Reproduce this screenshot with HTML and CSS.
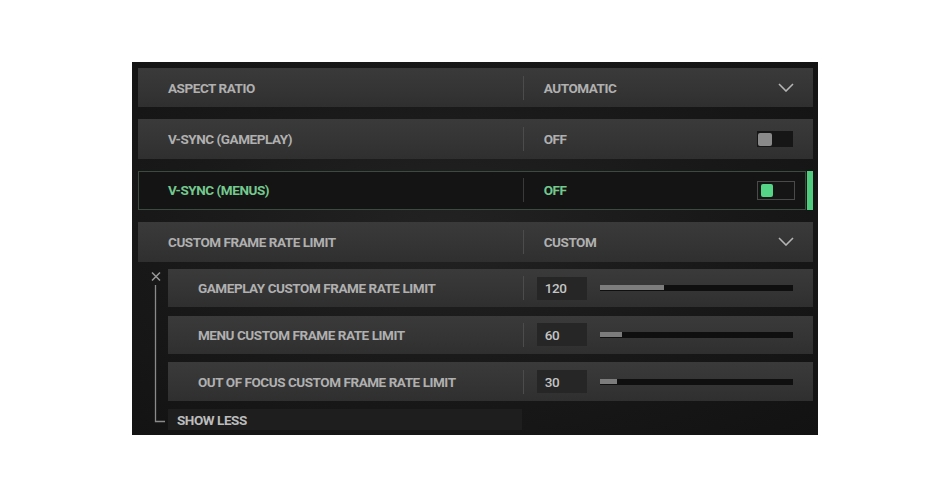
FILE: index.html
```html
<!DOCTYPE html>
<html>
<head>
<meta charset="utf-8">
<link rel="stylesheet" href="styles.css">
</head>
<body>
<div class="panel">
  <div class="row">
    <div class="label">ASPECT RATIO</div>
    <div class="sep"></div>
    <div class="value">AUTOMATIC</div>
    <svg class="chev" width="16" height="9" viewBox="0 0 16 9"><polyline points="1,1 8,8 15,1" fill="none" stroke="#b4b4b4" stroke-width="1.6"/></svg>
  </div>
  <div class="row">
    <div class="label">V-SYNC (GAMEPLAY)</div>
    <div class="sep"></div>
    <div class="value">OFF</div>
    <div class="toggle"><div class="knob"></div></div>
  </div>
  <div class="selwrap">
    <div class="row selected">
      <div class="label">V-SYNC (MENUS)</div>
      <div class="sep"></div>
      <div class="value">OFF</div>
      <div class="toggle on"><div class="knob"></div></div>
    </div>
    <div class="bar"></div>
  </div>
  <div class="row">
    <div class="label">CUSTOM FRAME RATE LIMIT</div>
    <div class="sep"></div>
    <div class="value">CUSTOM</div>
    <svg class="chev" width="16" height="9" viewBox="0 0 16 9"><polyline points="1,1 8,8 15,1" fill="none" stroke="#b4b4b4" stroke-width="1.6"/></svg>
  </div>
  <div class="sub">
    <svg class="tree" width="30" height="161" viewBox="0 0 30 161">
      <path d="M14 3.5 L22 11.5 M22 3.5 L14 11.5" stroke="#9a9a9a" stroke-width="1.5" fill="none"/>
      <path d="M17.5 16 V152.5 H27" stroke="#8a8a8a" stroke-width="1.3" fill="none"/>
    </svg>
    <div class="subrows">
      <div class="row subrow">
        <div class="label">GAMEPLAY CUSTOM FRAME RATE LIMIT</div>
        <div class="sep"></div>
        <div class="num">120</div>
        <div class="track"><div class="fill" style="width:33.5%"></div></div>
      </div>
      <div class="row subrow">
        <div class="label">MENU CUSTOM FRAME RATE LIMIT</div>
        <div class="sep"></div>
        <div class="num">60</div>
        <div class="track"><div class="fill" style="width:11.3%"></div></div>
      </div>
      <div class="row subrow">
        <div class="label">OUT OF FOCUS CUSTOM FRAME RATE LIMIT</div>
        <div class="sep"></div>
        <div class="num">30</div>
        <div class="track"><div class="fill" style="width:8.8%"></div></div>
      </div>
      <div class="showless">SHOW LESS</div>
    </div>
  </div>
</div>
</body>
</html>
```
FILE: styles.css
```css
html, body {
  margin: 0;
  padding: 0;
  background: #ffffff;
}
body {
  font-family: Roboto, "DejaVu Sans", sans-serif;
  font-weight: 700;
  font-size: 13.5px;
  letter-spacing: -0.45px;
  color: #b0b0b0;
}
.panel {
  box-sizing: border-box;
  margin: 62px 0 0 132px;
  width: 686px;
  height: 373px;
  padding: 6px 5px 0 6px;
  background: radial-gradient(ellipse at 45% 45%, #222222 0%, #181818 55%, #121212 100%);
  display: flex;
  flex-direction: column;
  gap: 12px;
}
.row {
  box-sizing: border-box;
  height: 39.4px;
  display: flex;
  align-items: center;
  padding: 0 19px 0 30px;
  background: linear-gradient(to bottom, #3a3a3a 0%, #343434 60%, #2f2f2f 100%);
}
.label {
  flex: 0 0 354.7px;
  white-space: nowrap;
}
.sep {
  flex: 0 0 1px;
  height: 24px;
  background: #4c4c4c;
}
.value {
  flex: 1;
  margin-left: 20px;
}
.chev {
  display: block;
}
.toggle {
  box-sizing: border-box;
  width: 36px;
  height: 16px;
  margin-right: 1px;
  background: #161616;
  padding: 1.5px 0 0 1px;
}
.knob {
  width: 14px;
  height: 13px;
  border-radius: 2px;
  background: #8a8a8a;
}
.selwrap {
  display: flex;
  gap: 1.5px;
  height: 39.4px;
}
.row.selected {
  flex: 1;
  height: 39.4px;
  border: 1px solid #3b4b40;
  background: #141414;
  color: #74c98e;
  padding-left: 29px;
  padding-right: 10px;
}
.row.selected .label {
  flex-basis: 354.7px;
}
.row.selected .sep {
  background: #3a3a3a;
}
.toggle.on {
  width: 38px;
  height: 19px;
  margin-right: 0;
  border: 1px solid #4a4a4a;
  background: #151515;
  padding: 2px 0 0 3px;
}
.toggle.on .knob {
  width: 12px;
  height: 13px;
  background: #55d386;
}
.bar {
  flex: 0 0 6px;
  background: #4fcc7e;
}
.sub {
  display: flex;
  margin-top: -4.5px;
  height: 161px;
}
.tree {
  display: block;
  flex: 0 0 30px;
}
.subrows {
  flex: 1;
  display: flex;
  flex-direction: column;
  gap: 8.4px;
}
.row.subrow {
  height: 38.3px;
  padding-right: 20px;
}
.subrow .label {
  flex-basis: 324.7px;
}
.num {
  box-sizing: border-box;
  width: 50px;
  height: 23px;
  margin-left: 13px;
  padding-left: 8px;
  background: #262626;
  display: flex;
  align-items: center;
  font-weight: 500;
  color: #c4c4c4;
}
.track {
  flex: 1;
  margin-left: 13px;
  height: 6px;
  background: #0f0f0f;
}
.fill {
  height: 5px;
  background: #7c7c7c;
}
.showless {
  box-sizing: border-box;
  width: 354px;
  height: 20.7px;
  margin-top: 0.2px;
  padding-left: 9px;
  display: flex;
  align-items: center;
  background: #1e1e1e;
  color: #bcbcbc;
}
```
